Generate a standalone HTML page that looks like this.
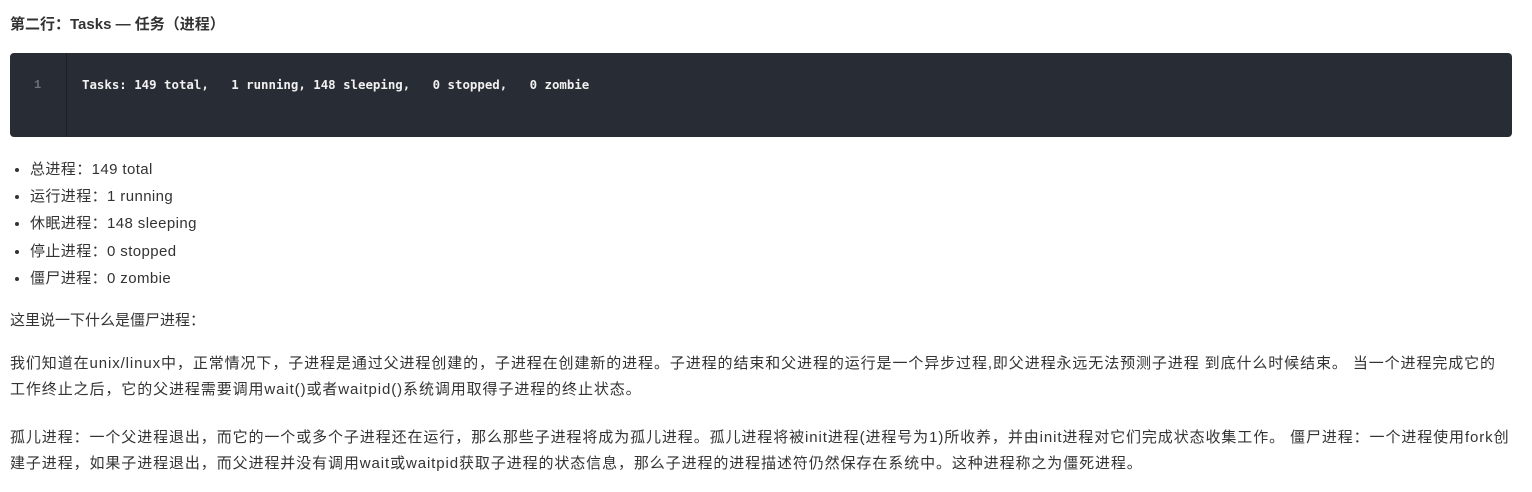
<!DOCTYPE html>
<html><head><meta charset="utf-8"><style>
body{margin:0;background:#fff;font-family:"Liberation Sans","Noto Sans CJK SC",sans-serif;color:#333;font-size:15px;}
.h{position:absolute;left:10px;top:14px;font-weight:bold;font-size:15px;line-height:22px;color:#333}
.code{position:absolute;left:10px;top:53px;width:1502px;height:84px;background:#282c34;border-radius:4px;}
.gut{position:absolute;left:0;top:0;width:56px;height:84px;border-right:1px solid #1c1f24;}
.ln{position:absolute;left:24px;top:25px;color:#6b717d;font:bold 12px "Liberation Mono",monospace;}
.ct{position:absolute;left:72px;top:24px;color:#f0f0f0;font:bold 12.4px "DejaVu Sans Mono","Liberation Mono",monospace;white-space:pre;}
ul{position:absolute;left:0;top:156px;margin:0;padding-left:30px;line-height:27.2px;letter-spacing:0.4px}
li::marker{color:#333}
p{position:absolute;left:10px;margin:0;line-height:26px;white-space:nowrap}
.w{letter-spacing:0.9px}
</style></head><body>
<div class="h">第二行：Tasks — 任务（进程）</div>
<div class="code"><div class="gut"></div><div class="ln">1</div><div class="ct">Tasks: 149 total,   1 running, 148 sleeping,   0 stopped,   0 zombie</div></div>
<ul><li>总进程：149 total</li><li>运行进程：1 running</li><li>休眠进程：148 sleeping</li><li>停止进程：0 stopped</li><li>僵尸进程：0 zombie</li></ul>
<p style="top:308px">这里说一下什么是僵尸进程：</p>
<p class="w" style="top:351px">我们知道在unix/linux中，正常情况下，子进程是通过父进程创建的，子进程在创建新的进程。子进程的结束和父进程的运行是一个异步过程,即父进程永远无法预测子进程 到底什么时候结束。 当一个进程完成它的<br>工作终止之后，它的父进程需要调用wait()或者waitpid()系统调用取得子进程的终止状态。</p>
<p class="w" style="top:425px">孤儿进程：一个父进程退出，而它的一个或多个子进程还在运行，那么那些子进程将成为孤儿进程。孤儿进程将被init进程(进程号为1)所收养，并由init进程对它们完成状态收集工作。 僵尸进程：一个进程使用fork创<br>建子进程，如果子进程退出，而父进程并没有调用wait或waitpid获取子进程的状态信息，那么子进程的进程描述符仍然保存在系统中。这种进程称之为僵死进程。</p>
</body></html>
